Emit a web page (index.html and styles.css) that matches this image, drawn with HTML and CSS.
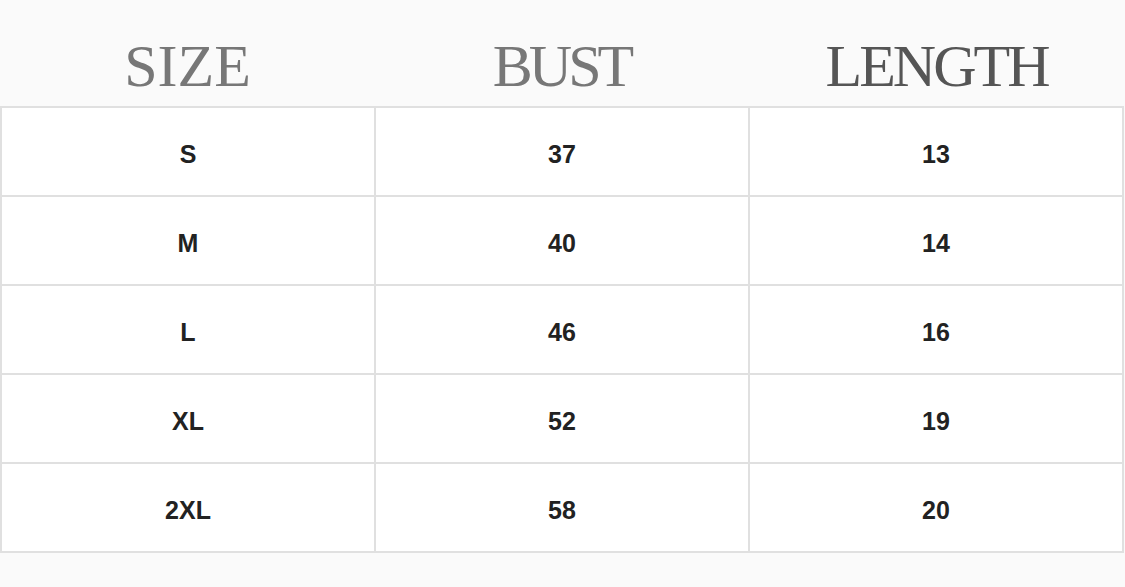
FILE: index.html
```html
<!DOCTYPE html>
<html>
<head>
<meta charset="utf-8">
<link rel="stylesheet" href="styles.css">
</head>
<body>
<div class="chart">
  <div class="head">
    <div class="hcell c1">SIZE</div>
    <div class="hcell c2">BUST</div>
    <div class="hcell c3">LENGTH</div>
  </div>
  <table class="grid">
    <tr><td>S</td><td>37</td><td>13</td></tr>
    <tr><td>M</td><td>40</td><td>14</td></tr>
    <tr><td>L</td><td>46</td><td>16</td></tr>
    <tr><td>XL</td><td>52</td><td>19</td></tr>
    <tr><td>2XL</td><td>58</td><td>20</td></tr>
  </table>
</div>
</body>
</html>
```
FILE: styles.css
```css
html, body {
  margin: 0;
  padding: 0;
  background: #fafafa;
}
.chart {
  width: 1125px;
}
.head {
  display: grid;
  grid-template-columns: 375px 373px 377px;
  height: 106px;
}
.hcell {
  font-family: "Liberation Serif", "Times New Roman", serif;
  font-size: 60px;
  line-height: 60px;
  padding-top: 36px;
  text-align: center;
  color: #777;
}
.c1 { letter-spacing: 0; }
.c2 { letter-spacing: -4px; padding-left: 0; }
.c3 { color: #555; letter-spacing: -3px; }
.grid {
  border-collapse: collapse;
  width: 1124px;
  background: #fff;
  table-layout: fixed;
}
.grid td {
  border: 2px solid #e0e0e0;
  height: 89px;
  padding: 6px 0 0 0;
  box-sizing: border-box;
  text-align: center;
  vertical-align: middle;
  font-family: "Liberation Sans", Arial, sans-serif;
  font-weight: bold;
  font-size: 25px;
  color: #222;
}
```
